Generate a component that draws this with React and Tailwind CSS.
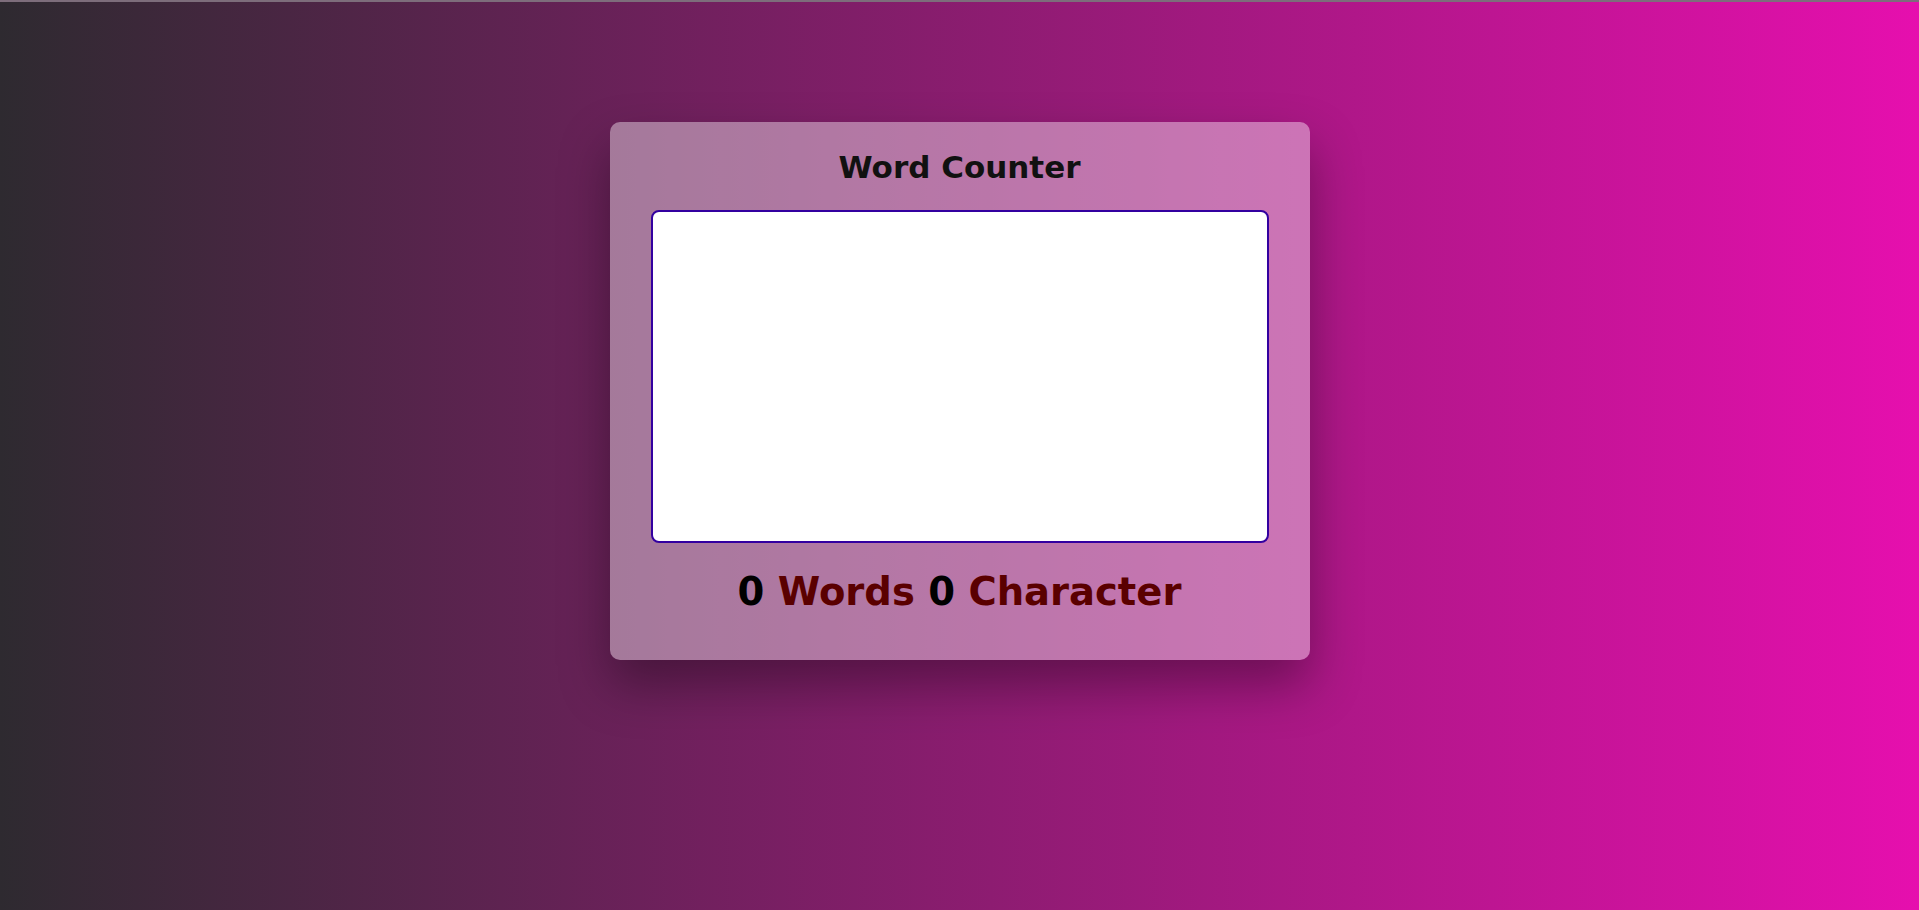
import React, {useState} from 'react'

const App = () => {
  const [text, setText] = useState('')

  const words = text.trim() === '' ? 0 : text.trim().split(/\s+/).length
  const chars = text.length

  return (
    <div
      className="min-h-[910px] w-full border-t-2 border-[#7d6d7b] bg-[linear-gradient(to_right,#2e2a30,#e60fae)] pt-[120px]"
      style={{fontFamily: '"DejaVu Sans", Inter, sans-serif'}}
    >
      {/* Card */}
      <div className="mx-auto flex w-[700px] flex-col items-center rounded-[10px] bg-white/40 px-[41px] pt-[25px] pb-[38px] shadow-[0_25px_50px_rgba(0,0,0,0.35)]">
        <h1 className="text-[31px] font-bold leading-[40px] text-[#111111]">
          Word Counter
        </h1>
        <textarea
          value={text}
          onChange={(e) => setText(e.target.value)}
          className="mt-[23px] h-[333px] w-full resize-none rounded-[8px] border-2 border-[#3300a0] bg-white p-2 outline-none"
        />
        <p className="mt-[19px] text-[38.5px] font-bold leading-[60px] text-[#5a0000]">
          <span className="text-black">{words}</span> Words{' '}
          <span className="text-black">{chars}</span> Character
        </p>
      </div>
    </div>
  )
}

export default App
